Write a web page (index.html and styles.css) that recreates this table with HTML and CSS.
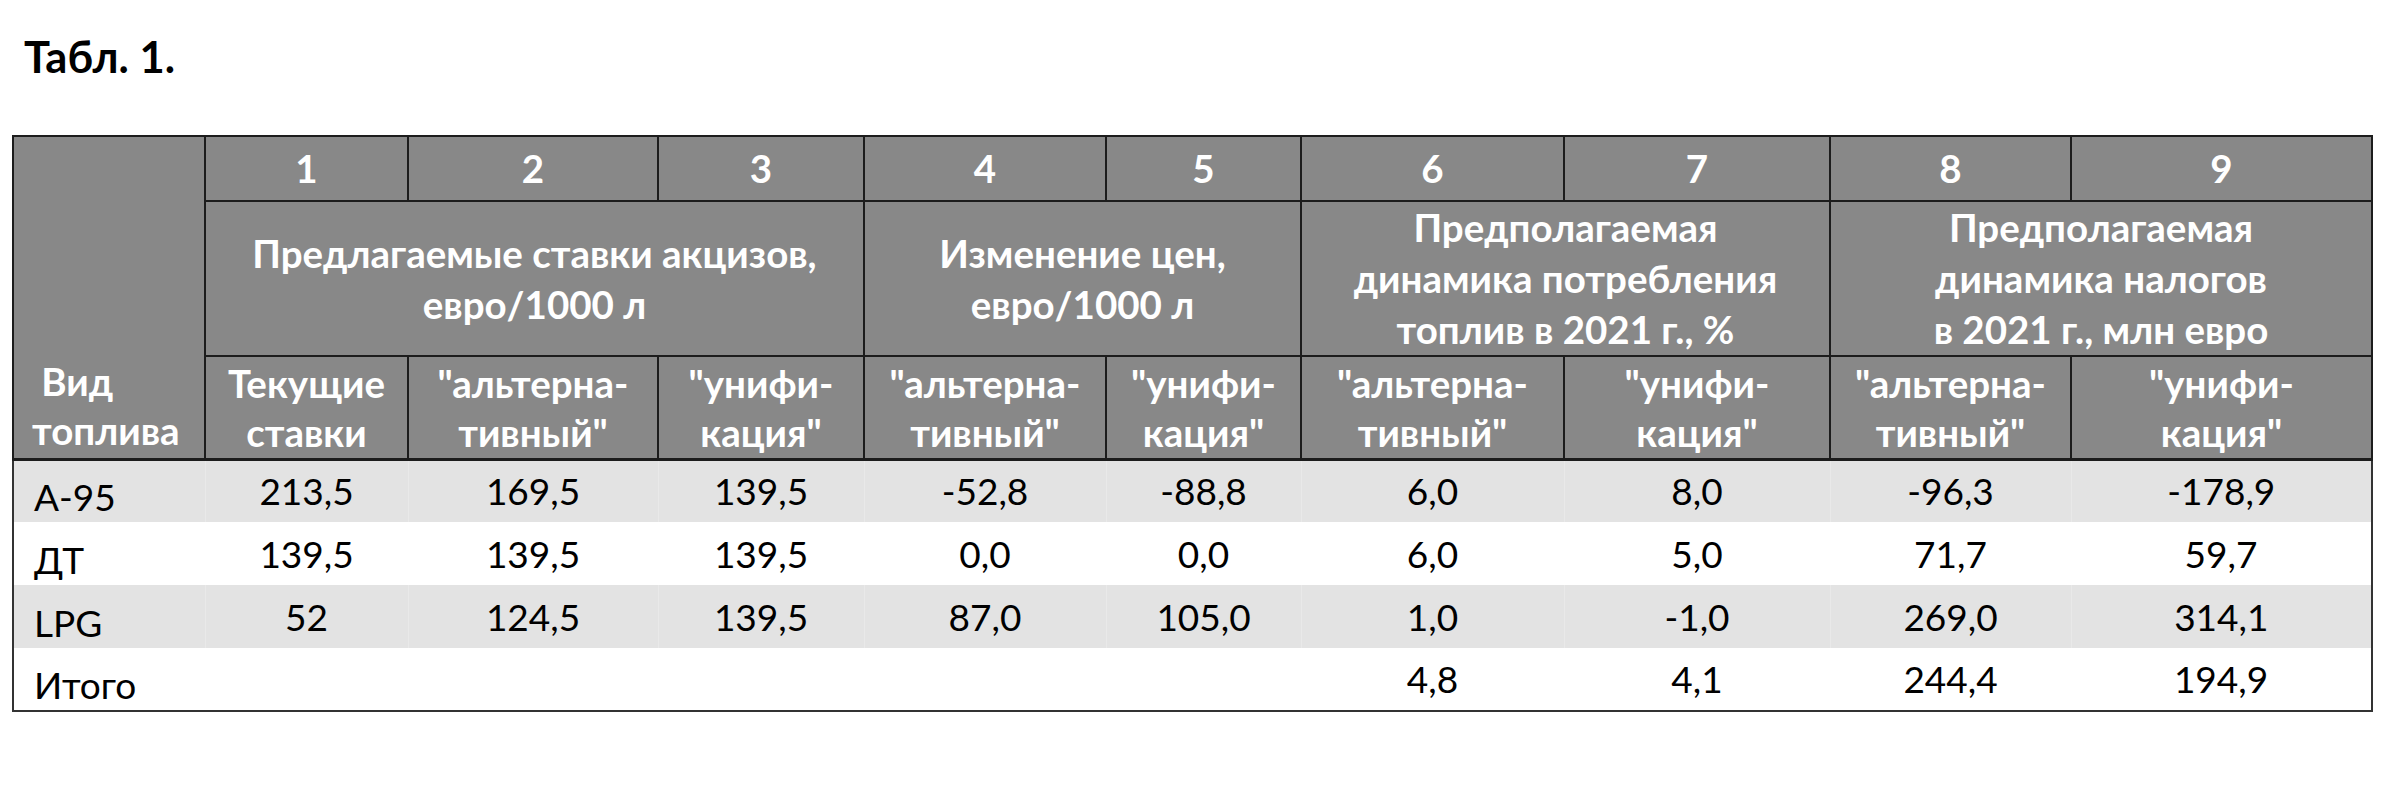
FILE: index.html
```html
<!DOCTYPE html>
<html lang="ru">
<head>
<meta charset="utf-8">
<title>Табл. 1.</title>
<link rel="stylesheet" href="styles.css">
</head>
<body>
<div class="caption">Табл. 1.</div>
<table class="tbl">
  <colgroup>
    <col class="c0"><col class="c1"><col class="c2"><col class="c3"><col class="c4">
    <col class="c5"><col class="c6"><col class="c7"><col class="c8"><col class="c9">
  </colgroup>
  <thead>
    <tr class="h1">
      <th rowspan="3" class="kind"><span class="l1">&nbsp;Вид</span><br>топлива</th>
      <th>1</th><th>2</th><th>3</th><th>4</th><th>5</th><th>6</th><th>7</th><th>8</th><th>9</th>
    </tr>
    <tr class="h2">
      <th colspan="3">Предлагаемые ставки акцизов,<br>евро/1000 л</th>
      <th colspan="2">Изменение цен,<br>евро/1000 л</th>
      <th colspan="2">Предполагаемая<br>динамика потребления<br>топлив в 2021 г., %</th>
      <th colspan="2">Предполагаемая<br>динамика налогов<br>в 2021 г., млн евро</th>
    </tr>
    <tr class="h3">
      <th>Текущие<br>ставки</th>
      <th>"альтерна-<br>тивный"</th>
      <th>"унифи-<br>кация"</th>
      <th>"альтерна-<br>тивный"</th>
      <th>"унифи-<br>кация"</th>
      <th>"альтерна-<br>тивный"</th>
      <th>"унифи-<br>кация"</th>
      <th>"альтерна-<br>тивный"</th>
      <th>"унифи-<br>кация"</th>
    </tr>
  </thead>
  <tbody>
    <tr class="row shade">
      <td class="name">A-95</td><td>213,5</td><td>169,5</td><td>139,5</td><td>-52,8</td><td>-88,8</td><td>6,0</td><td>8,0</td><td>-96,3</td><td>-178,9</td>
    </tr>
    <tr class="row">
      <td class="name">ДТ</td><td>139,5</td><td>139,5</td><td>139,5</td><td>0,0</td><td>0,0</td><td>6,0</td><td>5,0</td><td>71,7</td><td>59,7</td>
    </tr>
    <tr class="row shade">
      <td class="name">LPG</td><td>52</td><td>124,5</td><td>139,5</td><td>87,0</td><td>105,0</td><td>1,0</td><td>-1,0</td><td>269,0</td><td>314,1</td>
    </tr>
    <tr class="row">
      <td class="name">Итого</td><td></td><td></td><td></td><td></td><td></td><td>4,8</td><td>4,1</td><td>244,4</td><td>194,9</td>
    </tr>
  </tbody>
</table>
</body>
</html>
```

FILE: styles.css
```css
html, body {
  margin: 0;
  padding: 0;
  background: #ffffff;
}

body {
  font-family: Lato, "Open Sans", "Liberation Sans", sans-serif;
  color: #000000;
}

.caption {
  font-weight: 700;
  font-size: 43.5px;
  line-height: 50px;
  padding: 31px 0 0 24px;
  height: 50px;
  margin-bottom: 54px;
}

.tbl {
  margin-left: 12px;
  border-collapse: collapse;
  table-layout: fixed;
  width: 2359px;
  border: 2px solid #333333;
}

.c0 { width: 192px; }
.c1 { width: 203px; }
.c2 { width: 250px; }
.c3 { width: 206px; }
.c4 { width: 242px; }
.c5 { width: 195px; }
.c6 { width: 263px; }
.c7 { width: 266px; }
.c8 { width: 241px; }
.c9 { width: 301px; }

.tbl th {
  background: #888888;
  color: #ffffff;
  font-weight: 700;
  font-size: 38.5px;
  line-height: 49px;
  border: 2px solid #1c1c1c;
  padding: 0 2px;
  text-align: center;
  vertical-align: middle;
  white-space: nowrap;
}

.tbl tr.h1 { height: 65px; }
.tbl tr.h2 { height: 155px; }
.tbl tr.h3 { height: 103px; }

.tbl tr.h2 th { line-height: 51px; }

.tbl tr.h3 th {
  border-bottom-width: 3px;
  padding-top: 2px;
}

.tbl th.kind {
  text-align: left;
  vertical-align: bottom;
  padding: 0 0 3px 18px;
  border-bottom-width: 3px;
}

.tbl tr.row { height: 63px; }

.tbl td {
  font-size: 37px;
  line-height: 44px;
  padding: 0 4px;
  text-align: center;
  vertical-align: middle;
  white-space: nowrap;
  border: none;
}

.tbl tr.shade td {
  background: #e3e3e3;
  border-left: 1px solid #e9e9e9;
}

.tbl tr.shade td.name {
  border-left: none;
}

.tbl td.name {
  text-align: left;
  padding: 12px 0 0 20px;
}
```
